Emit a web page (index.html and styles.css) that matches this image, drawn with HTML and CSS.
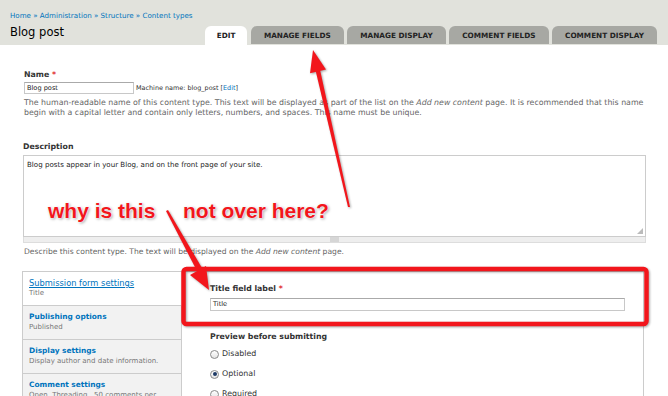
FILE: index.html
```html
<!DOCTYPE html>
<html>
<head>
<meta charset="utf-8">
<link rel="stylesheet" href="styles.css">
</head>
<body>
<div class="page">
  <header class="header">
    <div class="titles">
      <nav class="crumbs"><a>Home</a> » <a>Administration</a> » <a>Structure</a> » <a>Content types</a></nav>
      <h1 class="title">Blog post</h1>
    </div>
    <ul class="tabs">
      <li class="tab active">EDIT</li>
      <li class="tab">MANAGE FIELDS</li>
      <li class="tab">MANAGE DISPLAY</li>
      <li class="tab">COMMENT FIELDS</li>
      <li class="tab">COMMENT DISPLAY</li>
    </ul>
  </header>

  <main class="content">
    <div class="field field-name">
      <div class="label">Name <span class="req">*</span></div>
      <div class="name-row">
        <div class="input input-name">Blog post</div>
        <span class="machine">Machine name: blog_post [<a>Edit</a>]</span>
      </div>
      <div class="help">The human-readable name of this content type. This text will be displayed as part of the list on the <em>Add new content</em> page. It is recommended that this name begin with a capital letter and contain only letters, numbers, and spaces. This name must be unique.</div>
    </div>

    <div class="field field-desc">
      <div class="label">Description</div>
      <div class="textarea">Blog posts appear in your Blog, and on the front page of your site.<span class="resize"></span></div>
      <div class="grippie"><span class="grip"></span></div>
      <div class="help">Describe this content type. The text will be displayed on the <em>Add new content</em> page.</div>
    </div>

    <div class="vtabs">
      <ul class="vtab-list">
        <li class="vtab selected"><a class="vtab-title">Submission form settings</a><span class="vtab-sum">Title</span></li>
        <li class="vtab"><a class="vtab-title">Publishing options</a><span class="vtab-sum">Published</span></li>
        <li class="vtab"><a class="vtab-title">Display settings</a><span class="vtab-sum">Display author and date information.</span></li>
        <li class="vtab"><a class="vtab-title">Comment settings</a><span class="vtab-sum">Open, Threading , 50 comments per page</span></li>
      </ul>
      <div class="vtab-pane">
        <div class="label">Title field label <span class="req">*</span></div>
        <div class="input input-title">Title</div>
        <div class="label label-preview">Preview before submitting</div>
        <div class="radios">
          <div class="radio"><span class="dot"></span>Disabled</div>
          <div class="radio"><span class="dot checked"></span>Optional</div>
          <div class="radio"><span class="dot"></span>Required</div>
        </div>
      </div>
    </div>
  </main>

  <div class="overlay">
    <svg class="marks" width="668" height="396" viewBox="0 0 668 396">
      <rect x="183.5" y="269" width="463" height="55" rx="3" fill="none" stroke="#f2161c" stroke-width="4.5"/>
      <polygon points="350,207 348,207 314.5,66 319,65" fill="#f2161c"/>
      <polygon points="313,50 326,69.5 310,73.2" fill="#f2161c"/>
      <polygon points="166,211 168,210 202,268 197,271" fill="#f2161c"/>
      <polygon points="209,290 190,275 206,266" fill="#f2161c"/>
    </svg>
    <div class="note note-why">why is this</div>
    <div class="note note-not">not over here?</div>
  </div>
</div>
</body>
</html>
```

FILE: styles.css
```css
* { box-sizing: border-box; }
html, body { margin: 0; padding: 0; }
body {
  width: 668px;
  height: 396px;
  overflow: hidden;
  background: #fff;
  font-family: "DejaVu Sans", sans-serif;
  color: #333;
}
a { color: #0074bd; text-decoration: none; }
ul { list-style: none; margin: 0; padding: 0; }

.page { position: relative; width: 668px; height: 396px; overflow: hidden; }

/* header */
.header {
  display: flex;
  justify-content: space-between;
  align-items: flex-end;
  height: 45px;
  background: #e1e2dc;
  padding: 0 11px 0 10px;
}
.titles { align-self: stretch; padding-top: 11px; }
.crumbs { font-size: 7.1px; line-height: 9px; color: #0074bd; }
.title {
  margin: 6px 0 0;
  font-size: 11.5px;
  line-height: 13px;
  font-weight: normal;
  color: #000;
}
.tabs { display: flex; gap: 3.5px; }
.tab {
  height: 18px;
  display: flex;
  align-items: center;
  justify-content: center;
  background: #a7a8a3;
  border-radius: 6px 6px 0 0;
  font-size: 7.3px;
  font-weight: bold;
  color: #222;
  padding: 0 13px;
}
.tab.active { background: #fff; padding: 0 12px; height: 19px; }

/* content */
.content { padding: 25px 24px 0 23px; }
.label { font-size: 7.8px; line-height: 10px; font-weight: bold; color: #333; }
.req { color: #e0262b; }
.field-name .label { padding-left: 1px; }
.name-row { display: flex; align-items: center; margin-top: 2px; }
.input {
  border: 1px solid #c8c8c8;
  border-top-color: #aaa;
  background: #fff;
  font-size: 6.6px;
  line-height: 10px;
  color: #222;
  padding: 0 2px;
}
.input-name { width: 110px; height: 12px; margin-left: 1px; }
.machine { font-size: 6.45px; color: #333; margin-left: 2px; }
.help {
  font-size: 7.85px;
  line-height: 10px;
  color: #666;
  margin-top: 4px;
  padding-left: 1px;
}
.field-desc { margin-top: 24px; }
.textarea {
  position: relative;
  margin-top: 3px;
  height: 82px;
  width: 623px;
  border: 1px solid #ccc;
  font-size: 7.1px;
  line-height: 10px;
  padding: 4px 3px;
  color: #222;
}
.resize {
  position: absolute;
  right: 2px;
  bottom: 2px;
  width: 0; height: 0;
  border-left: 6px solid transparent;
  border-bottom: 6px solid #bbb;
}
.grippie {
  width: 623px;
  height: 6px;
  background: #eee;
  border: 1px solid #ddd;
  border-top: none;
  display: flex;
  justify-content: center;
}
.grip { width: 9px; height: 5px; background: #d6d6d6; }
.field-desc .help { margin-top: 4px; font-size: 7.6px; }

/* vertical tabs */
.vtabs { display: flex; margin-top: 14px; margin-left: -1px; }
.vtab-list {
  width: 160px;
  flex: none;
  background: #f2f2f2;
  border: 1px solid #ccc;
  border-right: none;
}
.vtab {
  height: 34px;
  padding: 6px 14px 0 6px;
  border-bottom: 1px solid #ccc;
  border-right: 1px solid #ccc;
  display: flex;
  flex-direction: column;
}
.vtab.selected { background: #fff; border-right-color: #fff; }
.vtab-title { font-size: 7.4px; line-height: 10px; font-weight: bold; color: #0074bd; }
.vtab.selected .vtab-title { text-decoration: underline; font-weight: normal; font-size: 8.3px; }
.vtab-sum { font-size: 7px; line-height: 10px; color: #777; }
.vtab-pane {
  width: 462px;
  border-right: 1px solid #ccc;
  border-top: 1px solid #ccc;
  padding: 12px 0 0 28px;
  height: 130px;
}
.input-title { width: 415px; height: 13px; margin-top: 4px; }
.label-preview { margin-top: 21px; }
.radios { margin-top: 2px; }
.radio {
  display: flex;
  align-items: center;
  font-size: 7.9px;
  line-height: 10px;
  height: 20px;
  color: #333;
}
.dot {
  width: 9px;
  height: 9px;
  border-radius: 50%;
  border: 1px solid #8a8a8a;
  background: linear-gradient(#fff, #e4e4e4);
  margin-right: 3px;
  position: relative;
}
.dot.checked::after {
  content: "";
  position: absolute;
  left: 1.5px; top: 1.5px;
  width: 4px; height: 4px;
  border-radius: 50%;
  background: #1e3a66;
}

/* annotations */
.overlay { position: absolute; left: 0; top: 0; width: 668px; height: 396px; pointer-events: none; }
.marks { position: absolute; left: 0; top: 0; filter: drop-shadow(1px 1px 1px rgba(0,0,0,0.35)); }
.note {
  position: absolute;
  font-family: "Liberation Sans", Arial, sans-serif;
  font-weight: bold;
  font-size: 21px;
  line-height: 24px;
  color: #f2161c;
  white-space: nowrap;
  text-shadow: 0 0 2px #fff, 0 0 2px #fff, 1px 1px 3px rgba(0,0,0,0.45);
}
.note-why { left: 48px; top: 199px; }
.note-not { left: 183px; top: 199px; }
```
